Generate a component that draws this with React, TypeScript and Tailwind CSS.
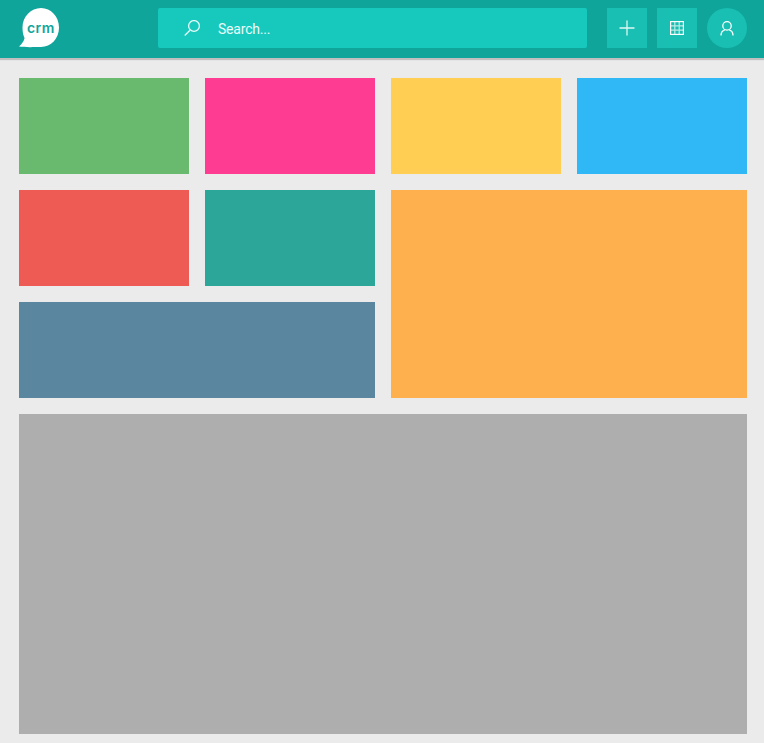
import { Plus } from 'lucide-react';

const smallTiles = [
  { id: 'green', color: 'bg-[#69b96e]' },
  { id: 'pink', color: 'bg-[#fe3c92]' },
  { id: 'yellow', color: 'bg-[#ffce52]' },
  { id: 'blue', color: 'bg-[#2fb7f6]' },
];

function SearchIcon() {
  return (
    <svg width="16" height="16" viewBox="0 0 16 16" fill="none" stroke="#e6fbf9" strokeWidth="1.3">
      <circle cx="10" cy="6" r="5.4" />
      <path d="M6 10.200 0.700 15.500" />
    </svg>
  );
}

function GridIcon() {
  return (
    <svg width="14" height="14" viewBox="0 0 14 14" fill="none" stroke="#ffffff">
      <rect x="0.6" y="0.6" width="12.800" height="12.800" strokeWidth="1.200" />
      <path d="M4.800 0.500v13M9.200 0.500v13M0.500 4.800h13M0.500 9.200h13" strokeWidth="1.200" strokeOpacity="0.7" />
    </svg>
  );
}

function UserIcon() {
  return (
    <svg width="14" height="15" viewBox="0 0 14 15" fill="none" stroke="#ffffff" strokeWidth="1.300">
      <circle cx="7" cy="4.900" r="4.200" />
      <path d="M1 14.600c0-3 1.400-4.800 3.700-5.400M13 14.600c0-3-1.400-4.800-3.700-5.400" />
    </svg>
  );
}

function Logo() {
  return (
    <div className="relative w-[41px] h-[40px]">
      <svg width="41" height="40" viewBox="0 0 41 40" className="block">
        <path
          d="M22 0C32 0 40 8.500 40 19.500S32 39 22 39C16 39 6 39.500 0 38.500C3 36 5.500 32 5.500 30C4 27 3.500 23 3.500 19.500C3.500 8.500 12 0 22 0z"
          fill="#ffffff"
        />
      </svg>
      <span className="absolute left-[8px] top-[11px] text-[#10a59b] text-[14px] leading-[18px] font-semibold tracking-[0.4px] font-['Inter',sans-serif]">
        crm
      </span>
    </div>
  );
}

export default function App() {
  return (
    <div className="min-h-[743px] bg-[#ebebeb] font-['Roboto',sans-serif]">
      <header className="h-[58px] bg-[#10a59b] shadow-[0_2px_1px_rgba(0,0,0,0.18)] flex items-start pt-2 pl-[19px] pr-[17px]">
        <Logo />
        <div className="ml-[98px] w-[429px] h-10 bg-[#17c9bc] rounded-[2px] flex items-center pl-[26px]">
          <SearchIcon />
          <span className="ml-[18px] mt-[2px] text-sm tracking-[-0.2px] text-[#eafbfa]">Search...</span>
        </div>
        <button className="ml-5 w-10 h-10 bg-[#18bfb2] flex items-center justify-center">
          <Plus className="w-6 h-6 text-[#dff7f5]" strokeWidth={1.3} />
        </button>
        <button className="ml-[10px] w-10 h-10 bg-[#18bfb2] flex items-center justify-center">
          <GridIcon />
        </button>
        <button className="ml-[10px] w-10 h-10 rounded-full bg-[#18bfb2] flex items-center justify-center">
          <UserIcon />
        </button>
      </header>

      <main className="pt-5 pl-[19px] pr-[17px] pb-[9px] grid grid-cols-4 gap-4">
        {smallTiles.map((tile) => (
          <div key={tile.id} className={`h-24 ${tile.color}`} />
        ))}
        <div className="h-24 bg-[#ee5b55]" />
        <div className="h-24 bg-[#2ca699]" />
        <div className="col-span-2 row-span-2 bg-[#ffb04e]" />
        <div className="col-span-2 h-24 bg-[#5a869f]" />
        <div className="col-span-4 h-80 bg-[#aeaeae]" />
      </main>
    </div>
  );
}
